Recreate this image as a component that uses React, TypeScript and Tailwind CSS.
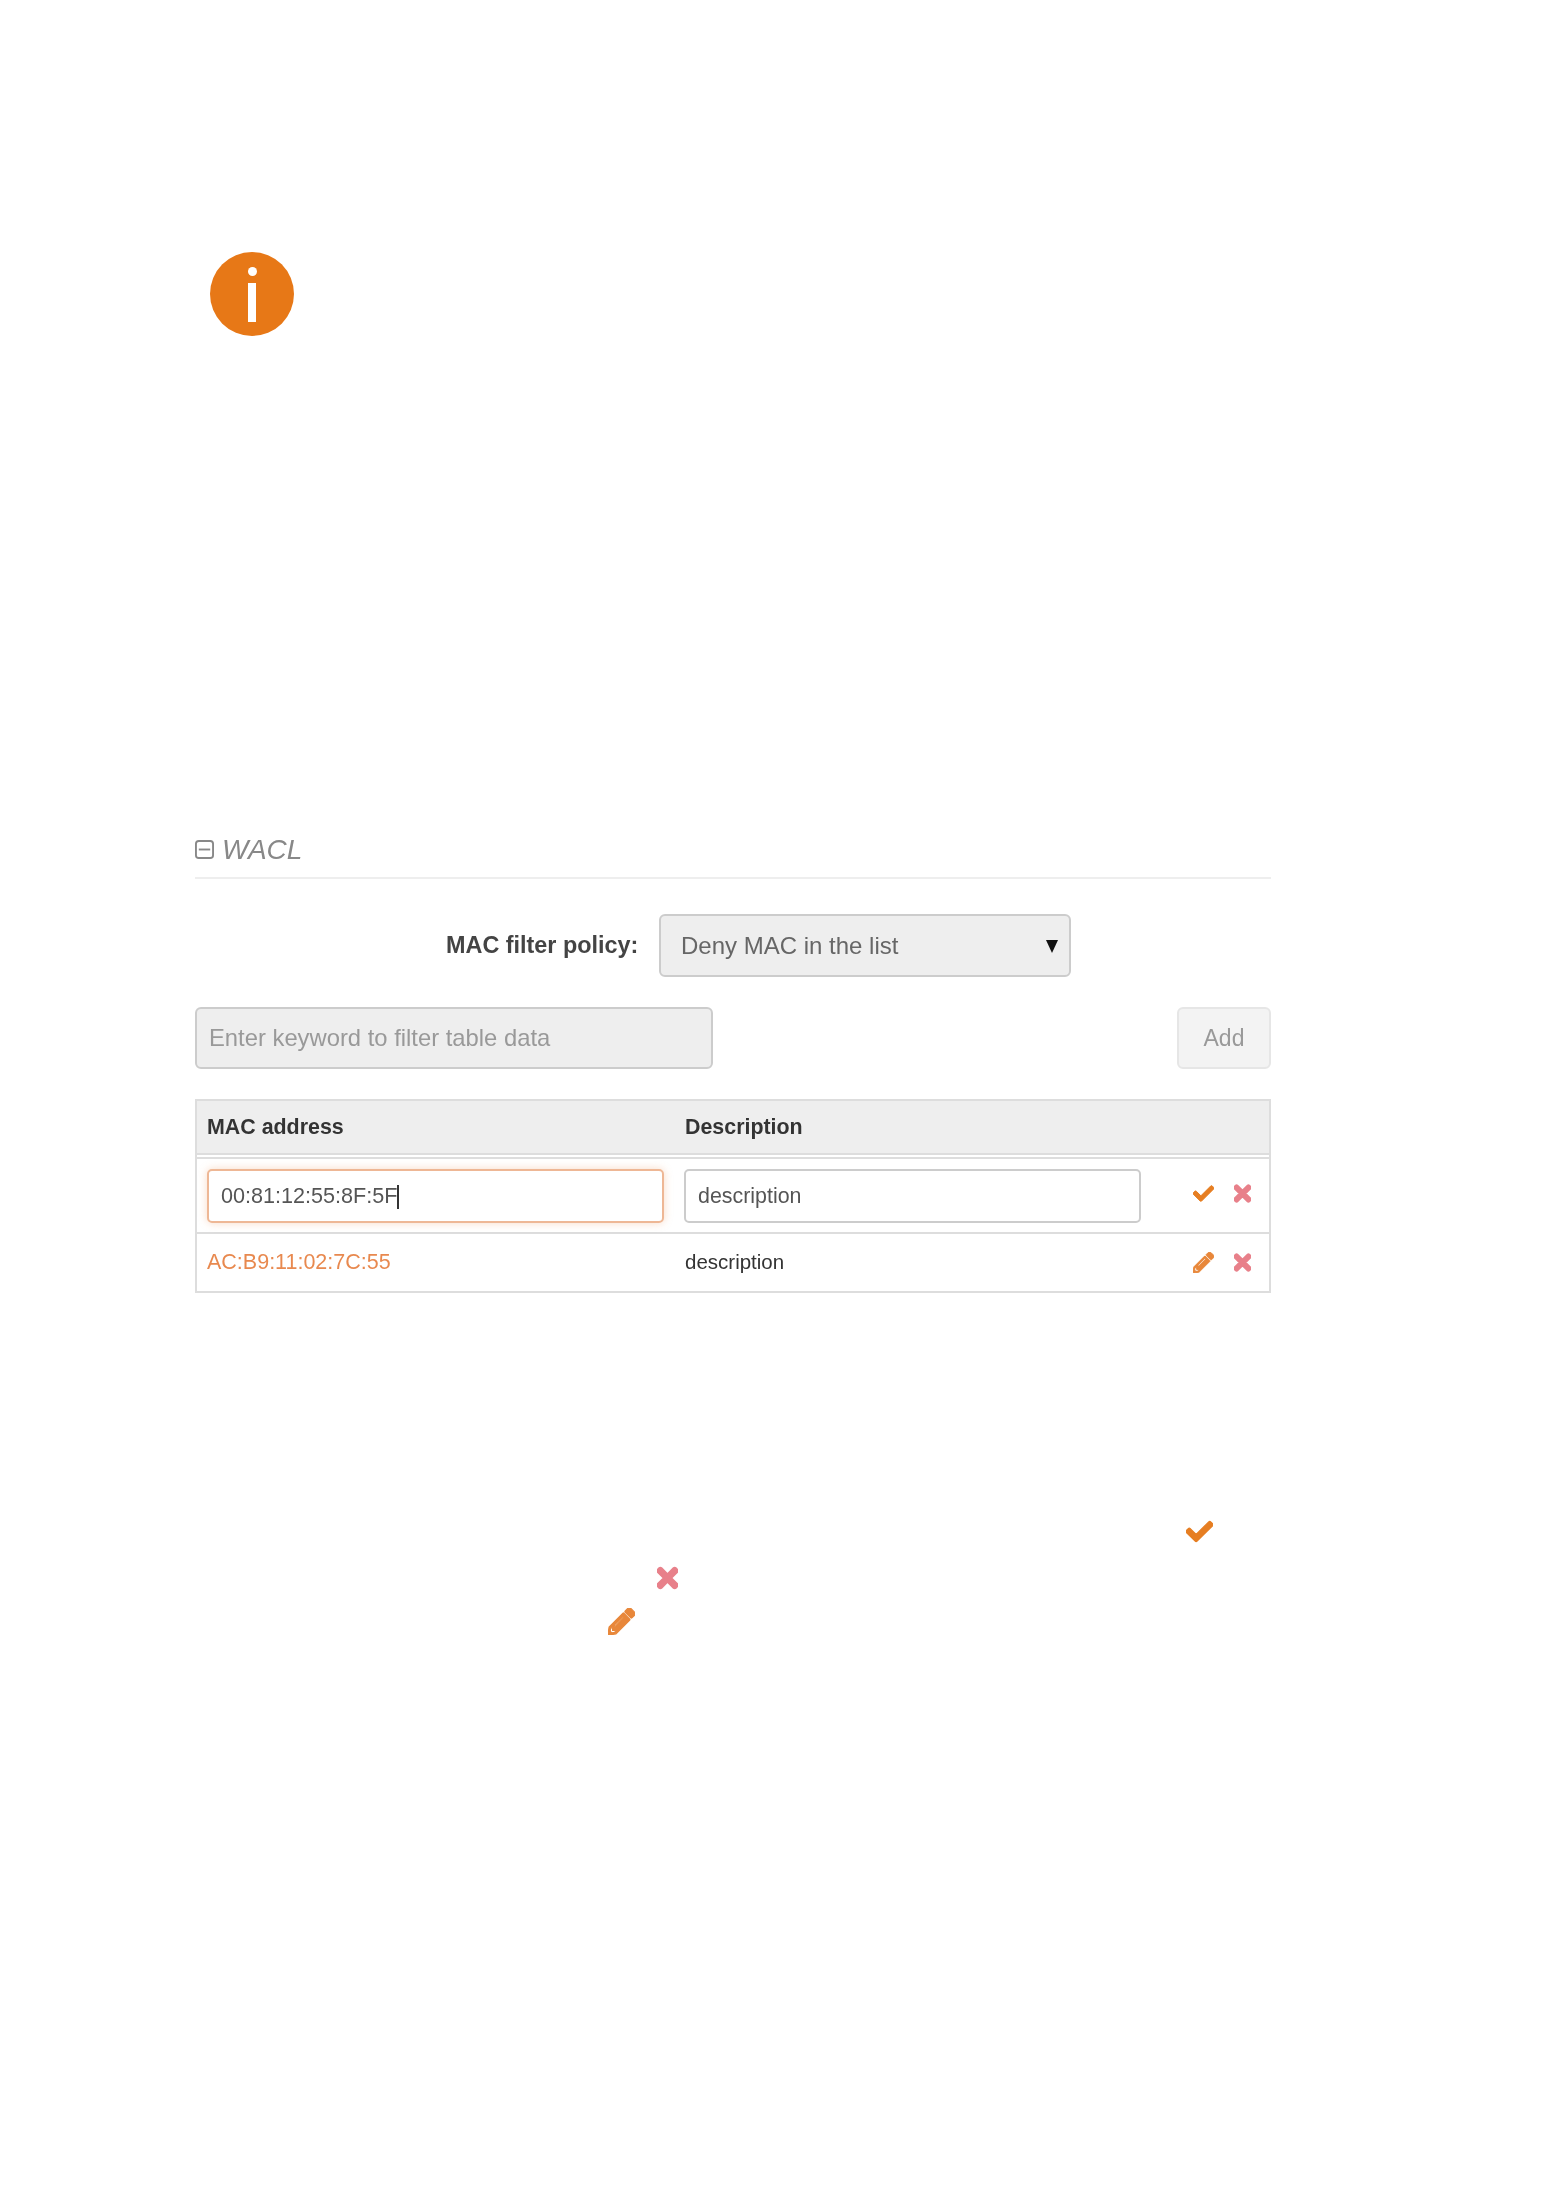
import { FaCheck, FaPencilAlt, FaTimes } from "react-icons/fa";

const font = { fontFamily: '"Liberation Sans", Arial, sans-serif' };

function CheckIcon({ large }: { large?: boolean }) {
  return <FaCheck className={large ? "block w-[27px] h-[27px] text-[#e67e22] stroke-[24]" : "block w-[21px] h-[21px] text-[#e67e22] stroke-[24]"} />;
}

function CrossIcon({ large }: { large?: boolean }) {
  return <FaTimes className={large ? "block w-[21px] h-[30px] text-[#e8808a] stroke-[30]" : "block w-[17px] h-[25px] text-[#e8808a] stroke-[30]"} />;
}

function PencilIcon({ large }: { large?: boolean }) {
  return <FaPencilAlt className={large ? "block w-[27px] h-[27px] text-[#e8873a] stroke-[24]" : "block w-[21px] h-[21px] text-[#e8873a] stroke-[24]"} />;
}

function Select() {
  return (
    <div className="relative w-[412px] h-[63px]">
      <select className="w-full h-full appearance-none rounded-[6px] border-2 border-[#ccc] bg-[#eee] pl-[20px] text-[24px] text-[#666] outline-none">
        <option>Deny MAC in the list</option>
      </select>
      <svg className="absolute right-[13px] top-[26px] w-[12px] h-[13px]" viewBox="0 0 12 13">
        <polygon points="0,0 12,0 6,13" fill="#111" />
      </svg>
    </div>
  );
}

export default function App() {
  return (
    <div className="w-[1554px] h-[2198px] bg-white overflow-hidden blur-[0.5px]" style={font}>
      {/* info badge */}
      <div className="pt-[252px] pl-[210px]">
        <div className="w-[84px] h-[84px] rounded-full bg-[#e77817] flex flex-col items-center">
          <div className="mt-[15px] w-[9px] h-[9px] rounded-full bg-white" />
          <div className="mt-[7px] w-[8px] h-[39px] bg-white" />
        </div>
      </div>

      {/* WACL panel */}
      <div className="mt-[498px] ml-[195px] w-[1076px]">
        <div className="flex items-center h-[31px]">
          <svg className="w-[19px] h-[19px] text-[#888]" viewBox="0 0 20 20" fill="none" stroke="currentColor" strokeWidth="2">
            <rect x="1" y="1" width="18" height="18" rx="3" />
            <line x1="4" y1="10" x2="16" y2="10" />
          </svg>
          <span className="ml-[8px] text-[28px] italic text-[#888] leading-none">WACL</span>
        </div>
        <div className="mt-[12px] h-[2px] bg-[#eee]" />

        <div className="mt-[35px] flex items-center pl-[251px]">
          <label className="w-[193px] text-[23.4px] font-bold text-[#444] whitespace-nowrap">MAC filter policy:</label>
          <div className="ml-[20px]">
            <Select />
          </div>
        </div>

        <div className="mt-[30px] flex justify-between h-[62px]">
          <input
            readOnly
            placeholder="Enter keyword to filter table data"
            className="w-[518px] rounded-[6px] border-2 border-[#ccc] bg-[#eee] pl-[12px] text-[23.8px] text-[#666] placeholder:text-[#999] outline-none"
          />
          <button className="w-[94px] rounded-[6px] border-2 border-[#e6e6e6] bg-[#f3f3f3] text-[23px] text-[#999]">
            Add
          </button>
        </div>

        <div className="mt-[30px] border-2 border-[#ddd]">
          <div className="flex items-center h-[52px] bg-[#eee] text-[21.4px] font-bold text-[#333]">
            <div className="w-[488px] pl-[10px]">MAC address</div>
            <div>Description</div>
          </div>
          <div className="h-[2px] bg-[#ddd]" />
          <div className="h-[2px]" />
          <div className="h-[2px] bg-[#ddd]" />

          <div className="flex items-center h-[73px] pl-[10px]">
            <div className="flex items-center w-[457px] h-[54px] rounded-[5px] border-2 border-[#eeb795] bg-white pl-[12px] pt-[2px] text-[21.6px] text-[#555] shadow-[0_0_8px_rgba(238,150,90,0.35)]">
              00:81:12:55:8F:5F
              <span className="w-[2px] h-[24px] bg-[#333]" />
            </div>
            <input
              readOnly
              value="description"
              className="ml-[20px] w-[457px] h-[54px] rounded-[5px] border-2 border-[#ccc] bg-white pl-[12px] pt-[2px] text-[21.4px] text-[#555] outline-none"
            />
            <div className="ml-[52px] mb-[4px]">
              <CheckIcon />
            </div>
            <div className="ml-[20px] mb-[4px]">
              <CrossIcon />
            </div>
          </div>

          <div className="h-[2px] bg-[#ddd]" />

          <div className="flex items-center h-[57px]">
            <div className="w-[488px] pl-[10px] text-[21.5px] text-[#e8894f]">AC:B9:11:02:7C:55</div>
            <div className="w-[508px] text-[20.5px] text-[#333]">description</div>
            <PencilIcon />
            <div className="ml-[20px]">
              <CrossIcon />
            </div>
          </div>
        </div>
      </div>

      {/* legend icons */}
      <div className="mt-[225px] ml-[1186px]">
        <CheckIcon large />
      </div>
      <div className="mt-[18px] ml-[657px]">
        <CrossIcon large />
      </div>
      <div className="mt-[15px] ml-[608px]">
        <PencilIcon large />
      </div>
    </div>
  );
}
